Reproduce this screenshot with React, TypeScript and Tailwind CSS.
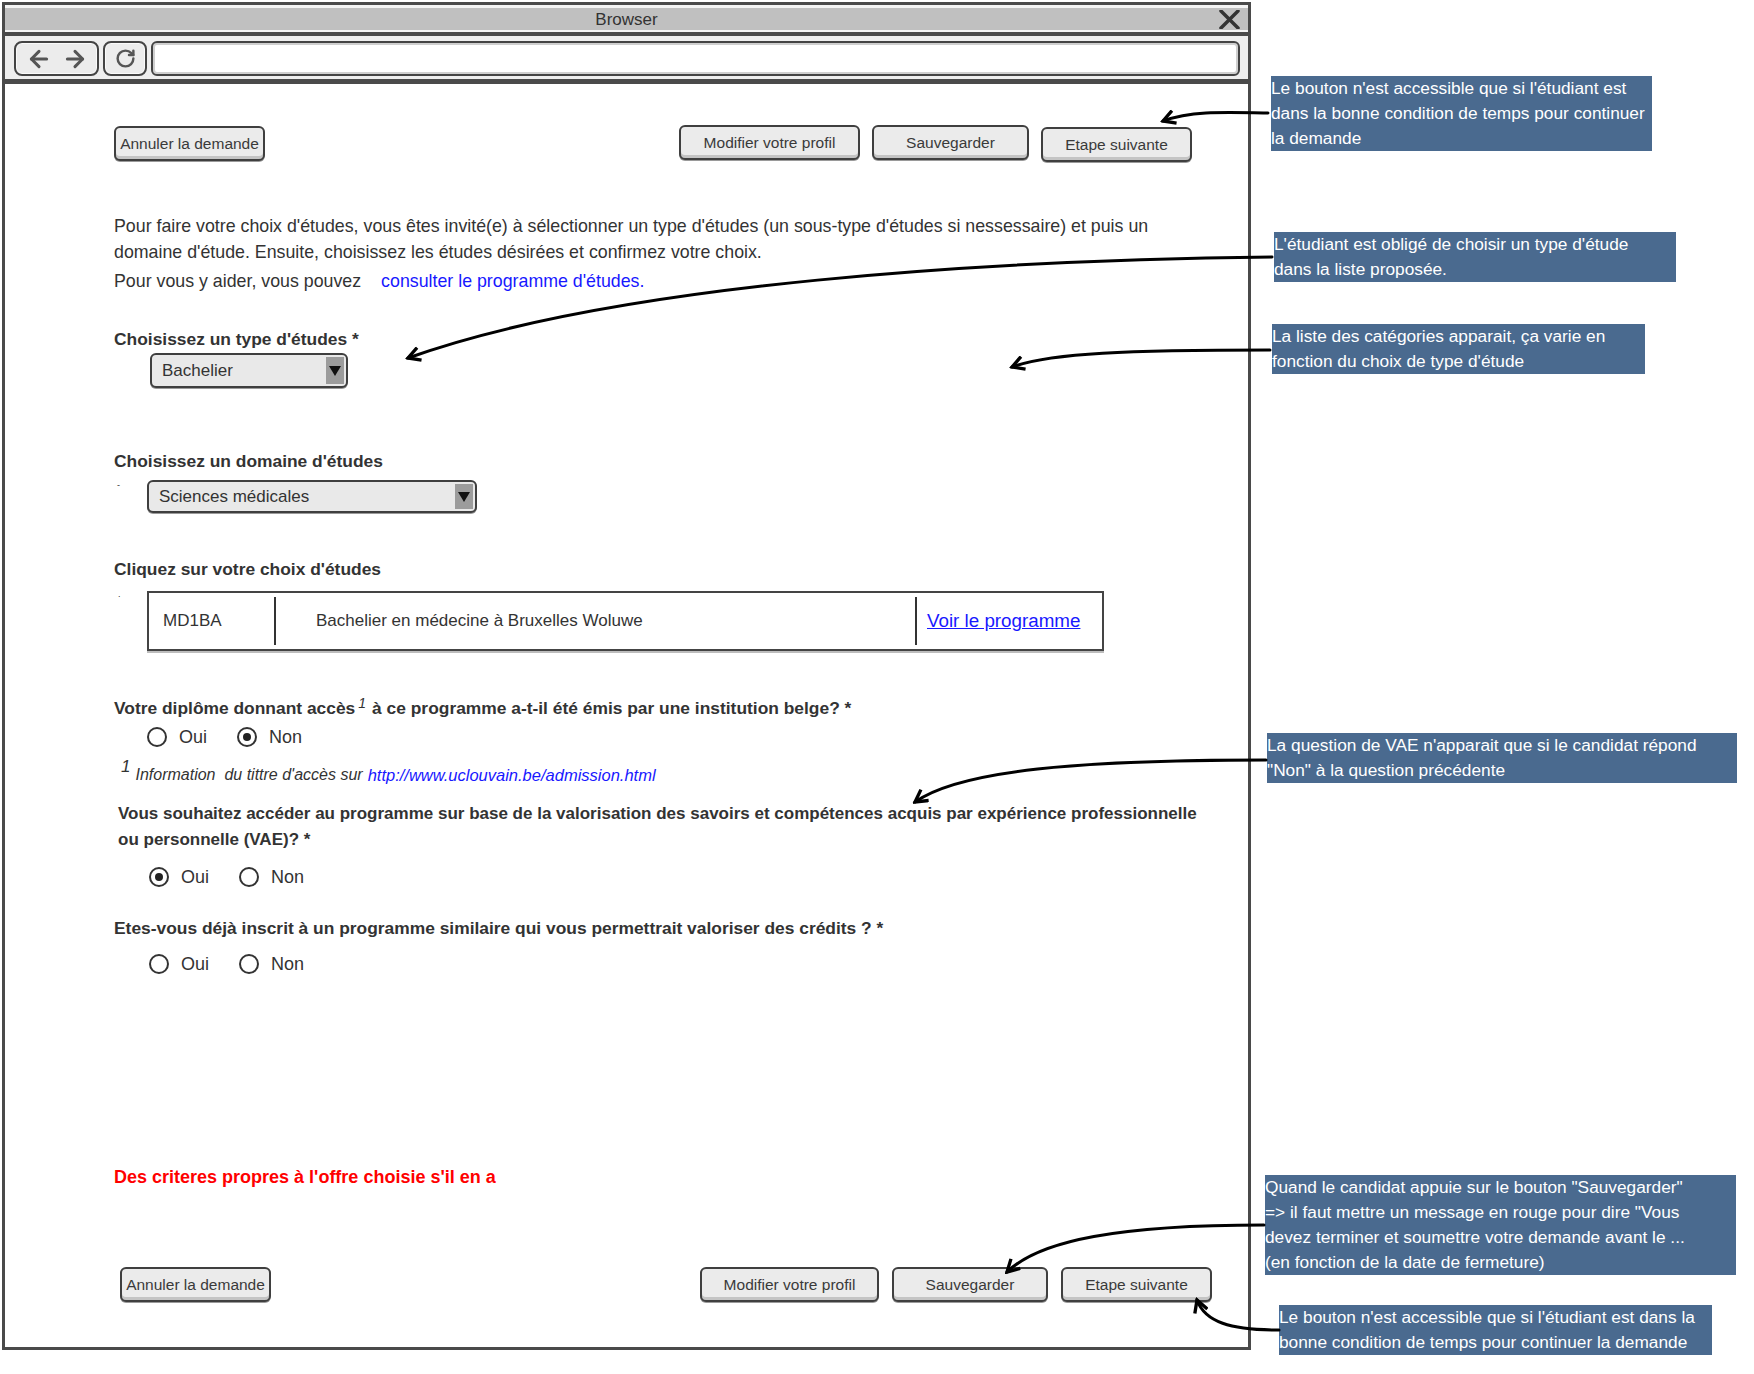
import React from "react";
import clsx from "clsx";
import { ArrowLeft, ArrowRight, RotateCw } from "lucide-react";

// Mockup pieces
function Btn(props: { children: React.ReactNode; className?: string }) {
  const { children, className } = props;
  return (
    <div
      className={clsx(
        "flex h-[35px] items-center justify-center whitespace-nowrap rounded-[6px] border-2 border-[#3f3f3f] bg-[#ebebeb] text-[15.5px] text-[#3a3a3a] shadow-[inset_0_-3px_0_#c4c4c4,0_1px_0_#9a9a9a]",
        className
      )}
    >
      {children}
    </div>
  );
}

function Select(props: { value: string; className?: string }) {
  const { value, className } = props;
  return (
    <div
      className={clsx(
        "flex items-stretch rounded-[6px] border-2 border-[#3f3f3f] bg-[#e9e9e9] p-[2px] shadow-[0_1px_0_#9a9a9a]",
        className
      )}
    >
      <span className="flex flex-1 items-center pl-[8px] text-[17px] text-[#333]">{value}</span>
      <span className="flex w-[18px] items-center justify-center bg-[#9c9c9c]">
        <span className="h-0 w-0 border-x-[6px] border-t-[10px] border-x-transparent border-t-[#111]" />
      </span>
    </div>
  );
}

function Radio(props: { label: string; checked?: boolean }) {
  const { label, checked } = props;
  return (
    <div className="flex w-[90px] items-center gap-[12px]">
      <span className="flex h-[20px] w-[20px] items-center justify-center rounded-full border-2 border-[#333] bg-white">
        {checked && <span className="h-[8px] w-[8px] rounded-full bg-[#222]" />}
      </span>
      <span className="text-[18px] leading-[20px] text-[#333]">{label}</span>
    </div>
  );
}

function Label(props: { children: React.ReactNode; className?: string }) {
  const { children, className } = props;
  return <div className={clsx("text-[17.4px] font-bold leading-[24px] text-[#333]", className)}>{children}</div>;
}

function Note(props: { lines: string[]; className?: string }) {
  const { lines, className } = props;
  return (
    <div className={clsx("whitespace-nowrap bg-[#4a6a8f] text-[17.3px] leading-[25px] text-white", className)}>
      {lines.map((l) => (
        <div key={l}>{l}</div>
      ))}
    </div>
  );
}

function BrowserWindow() {
  return (
    <div className="ml-[2px] mt-[2px] flex h-[1348px] w-[1249px] shrink-0 flex-col border-[3px] border-[#4a4a4a] bg-white">
      {/* title bar */}
      <div className="relative flex h-[31px] items-center justify-center border-b-[4px] border-t-[3px] border-b-[#4a4a4a] border-t-[#f4f4f4] bg-[#c0c0c0] text-[17px] text-[#333] shadow-[inset_0_-2px_0_#f4f4f4]">
        Browser
        <svg className="absolute right-[8px] top-[2px]" width={21} height={19} viewBox="0 0 21 19">
          <path d="M2,1 L19,18 M19,1 L2,18" stroke="#333" strokeWidth={3.5} strokeLinecap="round" />
        </svg>
      </div>
      {/* toolbar */}
      <div className="flex h-[48px] items-start gap-[4px] border-b-[5px] border-[#4a4a4a] bg-[#eeeeee] pl-[9px] pr-[8px] pt-[5px]">
        <div className="flex h-[35px] w-[85px] items-center justify-center gap-[10px] rounded-[8px] border-2 border-[#444] bg-[#ececec] shadow-[inset_0_0_0_1px_#fafafa]">
          <ArrowLeft size={26} strokeWidth={2.8} color="#555" />
          <ArrowRight size={26} strokeWidth={2.8} color="#555" />
        </div>
        <div className="flex h-[35px] w-[44px] items-center justify-center rounded-[8px] border-2 border-[#444] bg-[#ececec] shadow-[inset_0_0_0_1px_#fafafa]">
          <RotateCw size={21} strokeWidth={2.8} color="#555" />
        </div>
        <div className="h-[35px] flex-1 rounded-[6px] border-2 border-[#444] bg-white shadow-[inset_0_0_0_2px_#cfcfcf]" />
      </div>

      {/* page content */}
      <div className="flex flex-1 flex-col pl-[109px] text-[#333]">
        <div className="mt-[41px] flex items-start pr-[56px]">
          <Btn className="mt-[1px] w-[151px]">Annuler la demande</Btn>
          <div className="ml-auto flex items-start gap-[12px]">
            <Btn className="w-[181px]">Modifier votre profil</Btn>
            <Btn className="w-[157px]">Sauvegarder</Btn>
            <Btn className="mt-[2px] w-[151px]">Etape suivante</Btn>
          </div>
        </div>

        <div className="mt-[51px] text-[17.8px] leading-[26px]">
          <p>
            Pour faire votre choix d'études, vous êtes invité(e) à sélectionner un type d'études (un sous-type d'études si
            nessessaire) et puis un
          </p>
          <p>domaine d'étude. Ensuite, choisissez les études désirées et confirmez votre choix.</p>
          <p className="mt-[3px]">
            Pour vous y aider, vous pouvez
            <span className="ml-[20px] text-[#1818ff]">consulter le programme d'études.</span>
          </p>
        </div>

        <Label className="mt-[33px]">Choisissez un type d'études *</Label>
        <Select className="ml-[36px] mt-[2px] h-[35px] w-[198px]" value="Bachelier" />

        <Label className="mt-[61px]">Choisissez un domaine d'études</Label>
        <div className="mt-[7px] flex items-start">
          <span className="w-[33px] pl-[3px] text-[9px] leading-[10px]">-</span>
          <Select className="h-[33px] w-[330px]" value="Sciences médicales" />
        </div>

        <Label className="mt-[44px]">Cliquez sur votre choix d'études</Label>
        <div className="mt-[10px] flex items-start">
          <span className="w-[33px] pl-[4px] text-[9px] leading-[6px]">.</span>
          <div className="flex h-[60px] w-[957px] items-stretch border-2 border-[#444] text-[17px] shadow-[0_2px_0_#bdbdbd]">
            <div className="flex w-[125px] items-center pl-[14px]">MD1BA</div>
            <div className="my-[4px] w-[2px] bg-[#333]" />
            <div className="flex w-[639px] items-center pl-[40px]">Bachelier en médecine à Bruxelles Woluwe</div>
            <div className="my-[4px] w-[2px] bg-[#333]" />
            <div className="flex flex-1 items-center pl-[10px] text-[18.8px] text-[#1818ff] underline">Voir le programme</div>
          </div>
        </div>

        <Label className="mt-[45px]">
          Votre diplôme donnant accès
          <sup className="relative -top-[6px] ml-[3px] mr-[6px] text-[14px] font-normal italic">1</sup>à ce programme
          a-t-il été émis par une institution belge? *
        </Label>
        <div className="ml-[33px] mt-[7px] flex">
          <Radio label="Oui" />
          <Radio label="Non" checked />
        </div>
        <div className="mt-[13px] flex items-start italic">
          <span className="ml-[7px] mr-[5px] text-[17px] leading-[14px]">1</span>
          <span className="mt-[6px] text-[16px] leading-[18px] text-[#333]">Information&nbsp; du tittre d'accès sur</span>
          <span className="ml-[5px] mt-[6px] text-[16.5px] leading-[18px] text-[#1818ff]">
            http://www.uclouvain.be/admission.html
          </span>
        </div>

        <div className="ml-[4px] mt-[17px] text-[17px] font-bold leading-[26px]">
          <p>
            Vous souhaitez accéder au programme sur base de la valorisation des savoirs et compétences acquis par expérience
            professionnelle
          </p>
          <p>ou personnelle (VAE)? *</p>
        </div>
        <div className="ml-[35px] mt-[14px] flex">
          <Radio label="Oui" checked />
          <Radio label="Non" />
        </div>

        <Label className="mt-[29px]">
          Etes-vous déjà inscrit à un programme similaire qui vous permettrait valoriser des crédits ? *
        </Label>
        <div className="ml-[35px] mt-[14px] flex">
          <Radio label="Oui" />
          <Radio label="Non" />
        </div>

        <div className="mt-[191px] text-[18px] font-bold leading-[24px] text-[#ff0000]">
          Des criteres propres à l'offre choisie s'il en a
        </div>

        <div className="mt-[78px] flex items-start pr-[36px]">
          <Btn className="ml-[6px] w-[151px]">Annuler la demande</Btn>
          <div className="ml-auto flex items-start gap-[13px]">
            <Btn className="w-[179px]">Modifier votre profil</Btn>
            <Btn className="w-[156px]">Sauvegarder</Btn>
            <Btn className="w-[151px]">Etape suivante</Btn>
          </div>
        </div>
      </div>
    </div>
  );
}

function Notes() {
  return (
    <div className="flex flex-col items-start">
      <Note
        className="ml-[20px] mt-[76px] h-[75px] w-[381px]"
        lines={[
          "Le bouton n'est accessible que si l'étudiant est",
          "dans la bonne condition de temps pour continuer",
          "la demande",
        ]}
      />
      <Note
        className="ml-[23px] mt-[81px] h-[50px] w-[402px]"
        lines={["L'étudiant est obligé de choisir un type d'étude", "dans la liste proposée."]}
      />
      <Note
        className="ml-[21px] mt-[42px] h-[50px] w-[373px]"
        lines={["La liste des catégories apparait, ça varie en", "fonction du choix de type d'étude"]}
      />
      <Note
        className="ml-[16px] mt-[359px] h-[50px] w-[470px]"
        lines={["La question de VAE n'apparait que si le candidat répond", "\"Non\" à la question précédente"]}
      />
      <Note
        className="ml-[14px] mt-[392px] h-[100px] w-[471px]"
        lines={[
          "Quand le candidat appuie sur le bouton \"Sauvegarder\"",
          "=> il faut mettre un message en rouge pour dire \"Vous",
          "devez terminer et soumettre votre demande avant le ...",
          "(en fonction de la date de fermeture)",
        ]}
      />
      <Note
        className="ml-[28px] mt-[30px] h-[50px] w-[433px]"
        lines={[
          "Le bouton n'est accessible que si l'étudiant est dans la",
          "bonne condition de temps pour continuer la demande",
        ]}
      />
    </div>
  );
}

function Arrows() {
  const paths = [
    "M1268,113 C1220,112 1190,111 1163,121",
    "M1272,257 C1000,260 620,282 408,358",
    "M1270,350 C1130,350 1050,353 1012,367",
    "M1266,760 C1080,760 960,770 915,802",
    "M1264,1225 C1120,1225 1040,1240 1007,1272",
    "M1279,1330 C1230,1330 1205,1322 1197,1300",
  ];
  return (
    <svg className="pointer-events-none absolute left-0 top-0" width={1754} height={1374}>
      <defs>
        <marker
          id="ah"
          viewBox="0 0 12 12"
          refX="10"
          refY="6"
          markerWidth="16"
          markerHeight="16"
          markerUnits="userSpaceOnUse"
          orient="auto"
        >
          <path d="M1,1 L10,6 L1,11" fill="none" stroke="#000" strokeWidth="2.5" strokeLinejoin="miter" />
        </marker>
      </defs>
      {paths.map((d) => (
        <path key={d} d={d} fill="none" stroke="#000" strokeWidth={3} strokeLinecap="round" markerEnd="url(#ah)" />
      ))}
    </svg>
  );
}

export default function App() {
  return (
    <div className="relative flex h-[1374px] w-[1754px] overflow-hidden bg-white font-['Liberation_Sans',Arial,sans-serif] text-[#333]">
      <BrowserWindow />
      <Notes />
      <Arrows />
    </div>
  );
}
